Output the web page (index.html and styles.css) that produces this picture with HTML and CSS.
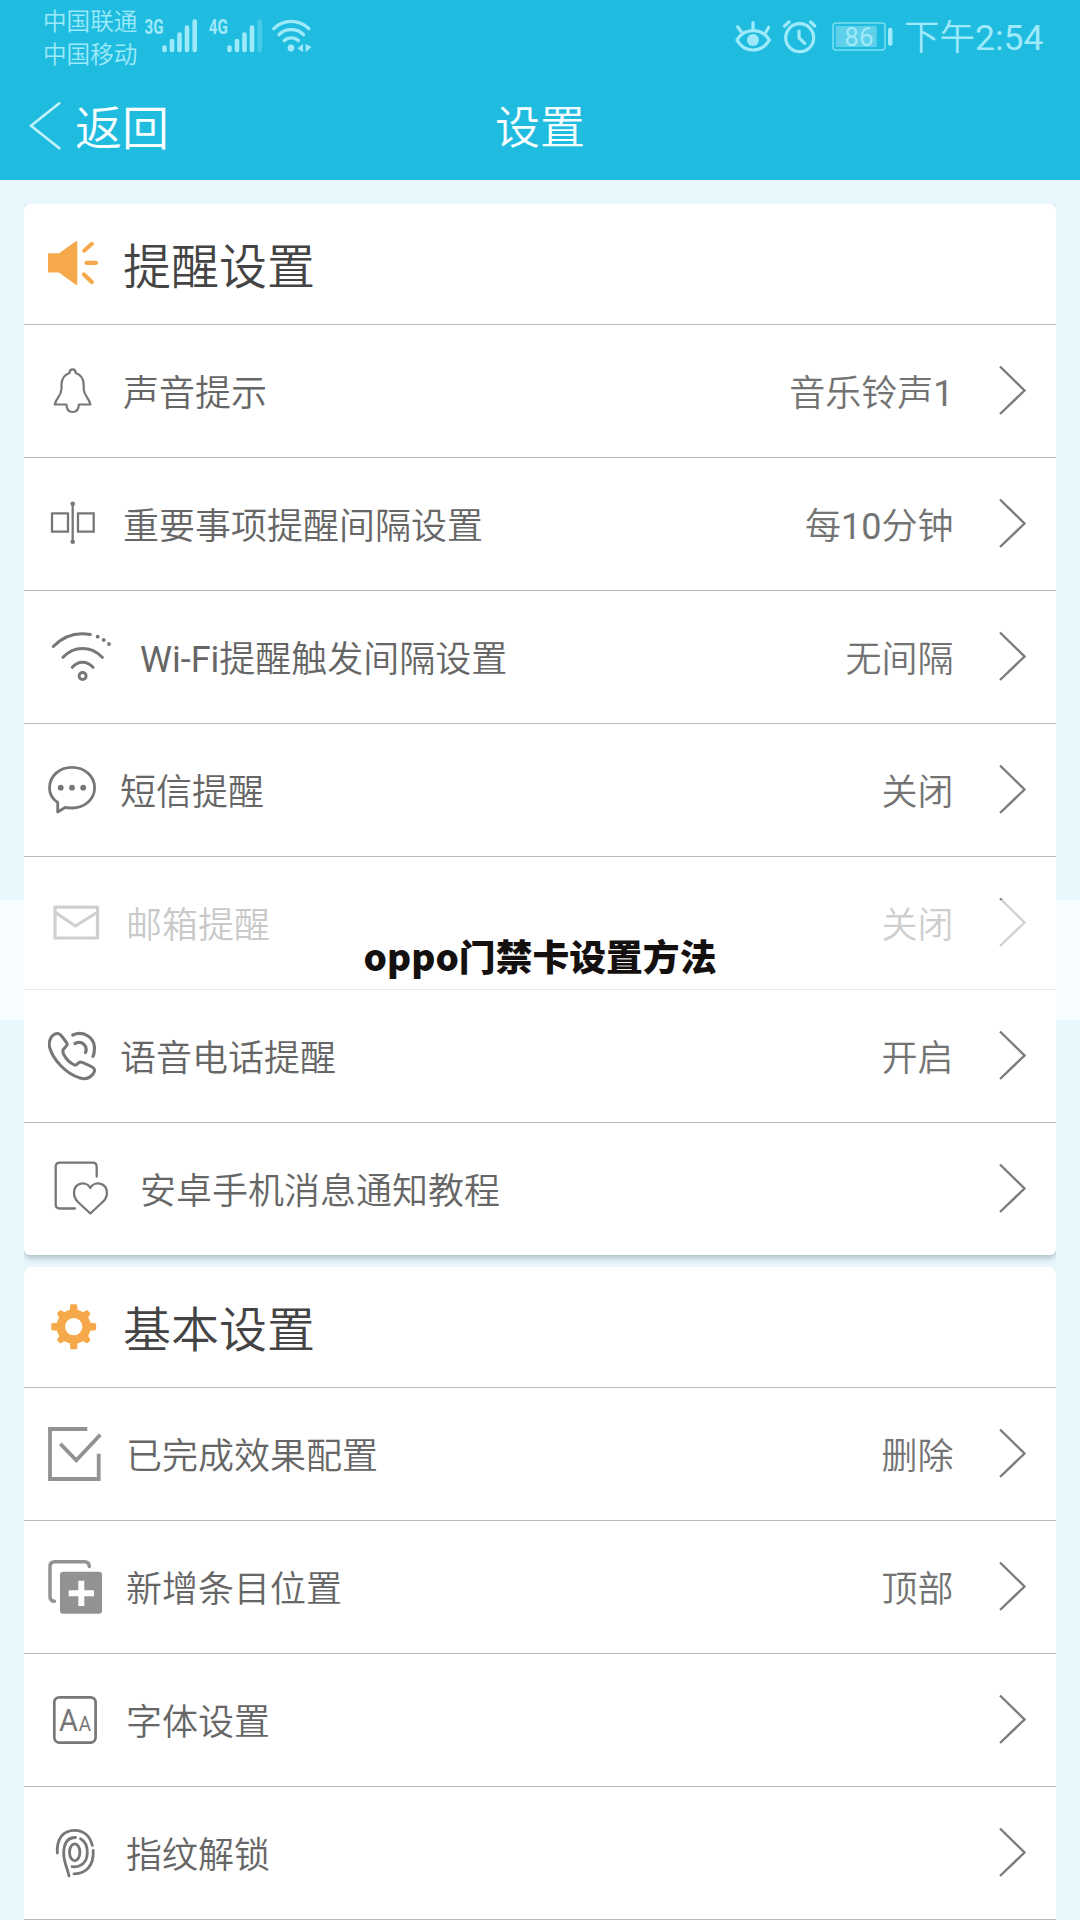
FILE: index.html
```html
<!DOCTYPE html>
<html lang="zh-CN">
<head>
  <meta charset="UTF-8" />
  <meta name="viewport" content="width=device-width, initial-scale=1" />
  <title>设置</title>
  <link rel="stylesheet" href="styles.css">
</head>
<body>

<header class="header">
  <div class="status-bar">
    <div class="carriers">
      <div>中国联通</div>
      <div>中国移动</div>
    </div>
    <svg class="status-left" viewBox="144 0 170 75" width="170" height="75">
      <text x="144.5" y="33.7" class="net" textLength="19" lengthAdjust="spacingAndGlyphs">3G</text>
      <g class="bars">
        <path d="M164.5 47.5V50M172 41V50M179.5 34.5V50M187 27.5V50M194.7 21.5V50"/>
      </g>
      <text x="208.8" y="33.7" class="net" textLength="19" lengthAdjust="spacingAndGlyphs">4G</text>
      <g class="bars">
        <path d="M229.5 47.5V50M237 41V50M244.5 34.5V50M252 27.5V50"/>
        <path d="M259.7 21.5V50" opacity=".3"/>
      </g>
      <g class="line" stroke-width="3.4">
        <path d="M273.8 28.6C283.5 19 299 19 308.8 28.6"/>
        <path d="M279 34.6C285.5 28 297 28 303.5 34.6"/>
        <path d="M284.3 40.6C288 37 294.5 37 298.3 40.6"/>
      </g>
      <circle class="solid" cx="291" cy="48" r="3.4"/>
      <path class="solid" d="M297.5 48.3L303 44V52.3ZM305.7 44L311.5 47L305.7 52.3Z"/>
    </svg>
    <svg class="status-right" viewBox="734 0 162 75" width="162" height="75">
      <g class="line" stroke-width="3.2">
        <path d="M737 40C744 27.500 762 27.500 769.300 40C762 53.300 744 53.300 737 40Z"/>
        <path d="M737.600 26.700L741 31.500M753 22.500V29M768.500 27.500L766 32"/>
        <circle cx="799.700" cy="37.700" r="14"/>
        <path d="M799 31V38L804.800 43.300M784.500 26L789 22M810.500 22L814.800 26"/>
      </g>
      <circle class="solid" cx="753" cy="40" r="6"/>
      <rect x="833" y="23" width="52" height="27" rx="3" class="battery"/>
      <rect x="835.7" y="26" width="41" height="21" class="charge"/>
      <text x="844.3" y="46" class="percent">86</text>
      <rect class="solid" x="888" y="27.7" width="4.5" height="18" rx="2"/>
    </svg>
    <div class="clock">下午<span class="latin">2:54</span></div>
  </div>
  <div class="nav">
    <div class="back">
      <svg viewBox="0 0 32 50" width="32" height="50"><path d="M30.300 2.300L2 24.700L30.300 47.300"/></svg>
      <span>返回</span>
    </div>
    <h1>设置</h1>
  </div>
</header>

<main>
  <section class="card">
    <h2>
      <svg class="icon orange" viewBox="0 0 51 60" width="51" height="60">
        <path class="fill" d="M0 20.300Q0 19.300 1 19.300H11L27.500 7.500Q29.300 6.500 29.300 8.500V49.500Q29.300 51.800 27.500 50.500L11 38.500H1Q0 38.500 0 37.500Z"/>
        <path stroke-width="4.200" d="M36.300 16.500L43.700 10M38.500 28.800H48M36 40.500L43.700 48"/>
      </svg>
      <span>提醒设置</span>
    </h2>
    <div class="row">
      <svg class="icon" viewBox="0 0 51 60" width="51" height="60">
        <path stroke-width="2.200" d="M6.800 43.500C8 36.500 13.300 35.500 13.500 28V23C14 16 17.500 13.300 21.500 12C21.500 9.500 22.500 8.300 24.600 8.300S27.700 9.500 27.700 12C31.700 13.300 35.200 16 35.700 23V28C35.900 35.500 41.200 36.500 42.400 43.500H30.800C30.800 48.700 28.300 51 24.600 51S18.500 48.700 18.500 43.500Z"/>
      </svg>
      <span class="label">声音提示</span>
      <span class="value">音乐铃声<span class="latin">1</span></span>
      <svg class="arrow" viewBox="0 0 28 52" width="28" height="52"><path d="M2 1.500L26.500 25.500L2 49"/></svg>
    </div>
    <div class="row">
      <svg class="icon" viewBox="0 0 51 60" width="51" height="60">
        <path stroke-width="2.300" class="sharp" d="M4 19.300H20V37.700H4ZM30 19.300H45.700V37.700H30ZM24.700 10V47"/>
        <circle class="fill" cx="24.700" cy="9.700" r="2.300"/>
        <circle class="fill" cx="24.700" cy="47.700" r="2.300"/>
      </svg>
      <span class="label">重要事项提醒间隔设置</span>
      <span class="value">每<span class="latin">10</span>分钟</span>
      <svg class="arrow" viewBox="0 0 28 52" width="28" height="52"><path d="M2 1.500L26.500 25.500L2 49"/></svg>
    </div>
    <div class="row">
      <svg class="icon wide" viewBox="0 0 68 60" width="68" height="60">
        <path stroke-width="3" d="M5.300 19.500C15 9.500 28 5 42.300 7.500M15 30.300C26 18.500 43 18.500 54.300 30.300M24.300 40.300C30 33.500 39 33.500 45 40.300"/>
        <circle class="fill" cx="49.700" cy="9.700" r="1.900"/>
        <circle class="fill" cx="55.700" cy="13" r="1.900"/>
        <circle class="fill" cx="61" cy="17" r="1.900"/>
        <circle stroke-width="2.900" cx="34.600" cy="49" r="3.500"/>
      </svg>
      <span class="label"><span class="latin">Wi-Fi</span>提醒触发间隔设置</span>
      <span class="value">无间隔</span>
      <svg class="arrow" viewBox="0 0 28 52" width="28" height="52"><path d="M2 1.500L26.500 25.500L2 49"/></svg>
    </div>
    <div class="row">
      <svg class="icon" viewBox="0 0 48 60" width="48" height="60">
        <path stroke-width="2.800" d="M9.700 52V42.500C4.500 39 1.500 34 1.500 28C1.500 16 11.500 7.300 24 7.300S46.600 16 46.600 27.700S36.500 48 24 48C21.500 48 19 47.800 17.500 47.300Z"/>
        <circle class="fill" cx="12.700" cy="27.700" r="2.900"/>
        <circle class="fill" cx="24" cy="27.700" r="2.900"/>
        <circle class="fill" cx="35.200" cy="27.700" r="2.900"/>
      </svg>
      <span class="label">短信提醒</span>
      <span class="value">关闭</span>
      <svg class="arrow" viewBox="0 0 28 52" width="28" height="52"><path d="M2 1.500L26.500 25.500L2 49"/></svg>
    </div>
    <div class="row">
      <svg class="icon" viewBox="0 0 54 60" width="54" height="60">
        <path stroke-width="3.200" d="M7 14.200H49.500V45H7ZM7.500 19.500L27.300 33L49 19.500"/>
      </svg>
      <span class="label">邮箱提醒</span>
      <span class="value">关闭</span>
      <svg class="arrow" viewBox="0 0 28 52" width="28" height="52"><path d="M2 1.500L26.500 25.500L2 49"/></svg>
    </div>
    <div class="row">
      <svg class="icon" viewBox="0 0 48 60" width="48" height="60">
        <path stroke-width="3" d="M9.500 7.500C11.500 7.500 12.500 8.500 14 10.500L18.500 16.500C20 18.800 19 20 17 21.500C14.500 23.500 14 25 15.500 28C18 33 22 37 26.500 39C29 39.800 29.500 36.500 32 36C33.500 35.700 44 40.500 45.500 42C47 43.500 46.500 46 45 48C42 52 37 53.500 32 52C18 47.500 5 34 1.500 21C.5 16 2.500 10.500 6 8.500C7.500 7.600 8.500 7.500 9.500 7.500Z"/>
        <path stroke-width="3.200" d="M24.800 9C36 4 47 12 46.400 23C46.400 26 46 28.500 45 30.300M27 17.500C34 14 40 20 37.500 26.500"/>
      </svg>
      <span class="label">语音电话提醒</span>
      <span class="value">开启</span>
      <svg class="arrow" viewBox="0 0 28 52" width="28" height="52"><path d="M2 1.500L26.500 25.500L2 49"/></svg>
    </div>
    <div class="row">
      <svg class="icon wide" viewBox="0 0 68 60" width="68" height="60">
        <path stroke-width="2.300" d="M48.700 17.500V8Q48.700 3.700 44.500 3.700H12Q7.700 3.700 7.700 8V45.500Q7.700 49.500 12 49.500H27"/>
        <path stroke-width="2.300" d="M42.300 29C39 22 26 22.500 26 34C26 38.500 28 41 30 43L42.300 54.500L54.600 43C57 41 58.900 38.500 58.900 34C58.900 22.500 45.600 22 42.300 29Z"/>
      </svg>
      <span class="label">安卓手机消息通知教程</span>
      <svg class="arrow" viewBox="0 0 28 52" width="28" height="52"><path d="M2 1.500L26.500 25.500L2 49"/></svg>
    </div>
  </section>

  <section class="card basic">
    <h2>
      <svg class="icon orange" viewBox="0 0 51 60" width="51" height="60">
        <circle cx="25.700" cy="29.700" r="12.900" stroke-width="8.500"/>
        <path class="teeth" d="M22.500 14L23 8H28.400L28.900 14ZM22.500 45.400L23 51.400H28.400L28.900 45.400ZM10 26.500L4 27V32.400L10 32.900ZM41.400 26.500L47.400 27V32.400L41.400 32.900ZM12.500 21L9.800 16.500L12.500 13.800L17 16.500ZM38.900 21L41.600 16.500L38.900 13.800L34.400 16.500ZM12.500 38.400L9.800 42.900L12.500 45.600L17 42.900ZM38.900 38.400L41.600 42.900L38.900 45.600L34.400 42.900Z"/>
      </svg>
      <span>基本设置</span>
    </h2>
    <div class="row">
      <svg class="icon light" viewBox="0 0 54 60" width="54" height="60">
        <path stroke-width="3.800" class="sharp" d="M39.300 5H2V55H50.700V29.700M12.300 19.700L28.300 36.300L52.300 10.700"/>
      </svg>
      <span class="label">已完成效果配置</span>
      <span class="value">删除</span>
      <svg class="arrow" viewBox="0 0 28 52" width="28" height="52"><path d="M2 1.500L26.500 25.500L2 49"/></svg>
    </div>
    <div class="row">
      <svg class="icon light" viewBox="0 0 54 60" width="54" height="60">
        <path stroke-width="3.500" d="M41.300 9.500Q41 4.800 36.500 4.800H7Q2 4.800 2 9.500V39.500Q2 44.300 6.500 44.300"/>
        <path class="fill" fill-rule="evenodd" d="M15 14.700H51Q54 14.700 54 17.700V53.700Q54 56.700 51 56.700H15Q12 56.700 12 53.700V17.700Q12 14.700 15 14.700ZM30.300 23.700V33.300H20.700V39.300H30.300V49H36.300V39.300H46V33.300H36.300V23.700Z"/>
      </svg>
      <span class="label">新增条目位置</span>
      <span class="value">顶部</span>
      <svg class="arrow" viewBox="0 0 28 52" width="28" height="52"><path d="M2 1.500L26.500 25.500L2 49"/></svg>
    </div>
    <div class="row">
      <svg class="icon" viewBox="0 0 54 60" width="54" height="60">
        <rect x="6.300" y="7.300" width="41.300" height="45.300" rx="5" stroke-width="2.700"/>
        <text x="11" y="40.700" font-size="32" textLength="19" lengthAdjust="spacingAndGlyphs">A</text>
        <text x="30.700" y="40.700" font-size="20" textLength="12.300" lengthAdjust="spacingAndGlyphs">A</text>
      </svg>
      <span class="label">字体设置</span>
      <svg class="arrow" viewBox="0 0 28 52" width="28" height="52"><path d="M2 1.500L26.500 25.500L2 49"/></svg>
    </div>
    <div class="row">
      <svg class="icon" viewBox="0 0 54 60" width="54" height="60">
        <g stroke-width="2.800">
          <path d="M9.300 30C8.500 16 15 7.300 26.500 7.300C35.500 7.300 42 13 44.300 22.500M45.200 27.500C46 42 38.500 51 26 50.800"/>
          <path d="M21 53C19.500 45 15.500 39 15.700 30C15.900 20 20 14.500 27.500 14.500M32.500 15.700C37.500 18.500 39.500 24 39.300 30C39 39.500 33 44.500 24 43.700"/>
          <ellipse cx="26.700" cy="29.300" rx="5.200" ry="8.500"/>
        </g>
      </svg>
      <span class="label">指纹解锁</span>
      <svg class="arrow" viewBox="0 0 28 52" width="28" height="52"><path d="M2 1.500L26.500 25.500L2 49"/></svg>
    </div>
  </section>
</main>

<div class="banner">oppo门禁卡设置方法</div>

</body>
</html>
```

FILE: styles.css
```css
* {
  box-sizing: border-box;
}
body {
  margin: 0;
  height: 1920px;
  overflow: hidden;
  position: relative;
  background: #e7f7fc;
  color: #666;
  font-family: Roboto, "Noto Sans CJK SC", sans-serif;
  font-weight: 350;
}
svg {
  display: block;
  flex: none;
}
.latin {
  font-weight: 400;
}
.header {
  height: 180px;
  background: #20bce0;
  color: #9eeafb;
}
.status-bar {
  display: flex;
  height: 75px;
  padding-left: 43px;
}
.carriers {
  width: 101px;
  padding-top: 6px;
  font-size: 23.6px;
  line-height: 32.5px;
}
.status-right {
  margin-left: 420px;
}
.clock {
  margin-left: 8px;
  font-size: 35.5px;
  line-height: 77px;
  white-space: nowrap;
}
.net {
  font-size: 20px;
  font-weight: 700;
  fill: #9eeafb;
}
.percent {
  font-size: 26px;
  font-weight: 400;
  fill: #9eeafb;
}
.bars {
  stroke: #9eeafb;
  stroke-width: 4.6;
  stroke-linecap: round;
}
.line {
  fill: none;
  stroke: #9eeafb;
  stroke-linecap: round;
  stroke-linejoin: round;
}
.solid {
  fill: #9eeafb;
}
.battery {
  fill: none;
  stroke: #7bdff4;
  stroke-width: 1.5;
}
.charge {
  fill: #5fd0ea;
}
.nav {
  display: grid;
  grid-template-columns: 1fr auto 1fr;
  align-items: center;
  height: 105px;
  color: #f6feff;
}
.back {
  display: flex;
  align-items: center;
  padding-left: 29px;
  gap: 14px;
  font-size: 47px;
  line-height: 60px;
}
.back svg {
  margin-bottom: 3px;
  fill: none;
  stroke: #c4f3fd;
  stroke-width: 2.6;
  stroke-linecap: round;
}
h1 {
  margin: 0;
  font-size: 45px;
  font-weight: 350;
  line-height: 60px;
}
.back span,
h1 {
  padding-top: 3px;
}
main {
  display: flex;
  flex-direction: column;
  gap: 12px;
  padding: 24px 24px 0;
}
.card {
  background: #fff;
  border-radius: 6px;
  box-shadow: 0 3px 6px rgb(0 40 50 / 0.28);
  clip-path: inset(0 0 -12px 0);
}
h2 {
  display: flex;
  align-items: center;
  gap: 24px;
  height: 120px;
  margin: 0;
  padding-left: 24px;
  color: #444;
  font-size: 48px;
  font-weight: 350;
}
h2 span {
  padding-bottom: 3px;
}
.row {
  display: flex;
  align-items: center;
  height: 133px;
  padding: 0 30px 0 24px;
  border-top: 1px solid #bbb;
  font-size: 36px;
}
.basic {
  padding-bottom: 24px;
}
.basic .row:last-child {
  height: 134px;
  border-bottom: 1px solid #bbb;
}
.label {
  flex: 1;
  margin-left: 24px;
  padding-bottom: 2px;
}
.value {
  margin-right: 44.5px;
  padding-bottom: 2px;
  color: #737373;
}
.icon {
  fill: none;
  stroke: #777;
  stroke-linecap: round;
  stroke-linejoin: round;
}
.icon .fill {
  fill: #777;
  stroke: none;
}
.icon text {
  fill: #777;
  stroke: none;
  font-weight: 400;
}
.icon .sharp {
  stroke-linecap: butt;
  stroke-linejoin: miter;
}
.icon.orange {
  stroke: #f6a94a;
}
.icon.orange .fill {
  fill: #f6a94a;
}
.orange .teeth {
  fill: #f6a94a;
  stroke-width: 1.5;
}
.icon.light {
  stroke: #929292;
}
.icon.light .fill {
  fill: #929292;
}
.arrow {
  fill: none;
  stroke: #7c7c7c;
  stroke-width: 2.4;
}
/* translucent title strip lying over the list */
.banner {
  position: absolute;
  top: 900px;
  left: 0;
  width: 100%;
  height: 120px;
  background: rgb(255 255 255 / 0.65);
  color: #151010;
  font-family: "Noto Sans CJK SC", sans-serif;
  font-size: 36.8px;
  font-weight: 900;
  line-height: 111px;
  text-align: center;
}
```
